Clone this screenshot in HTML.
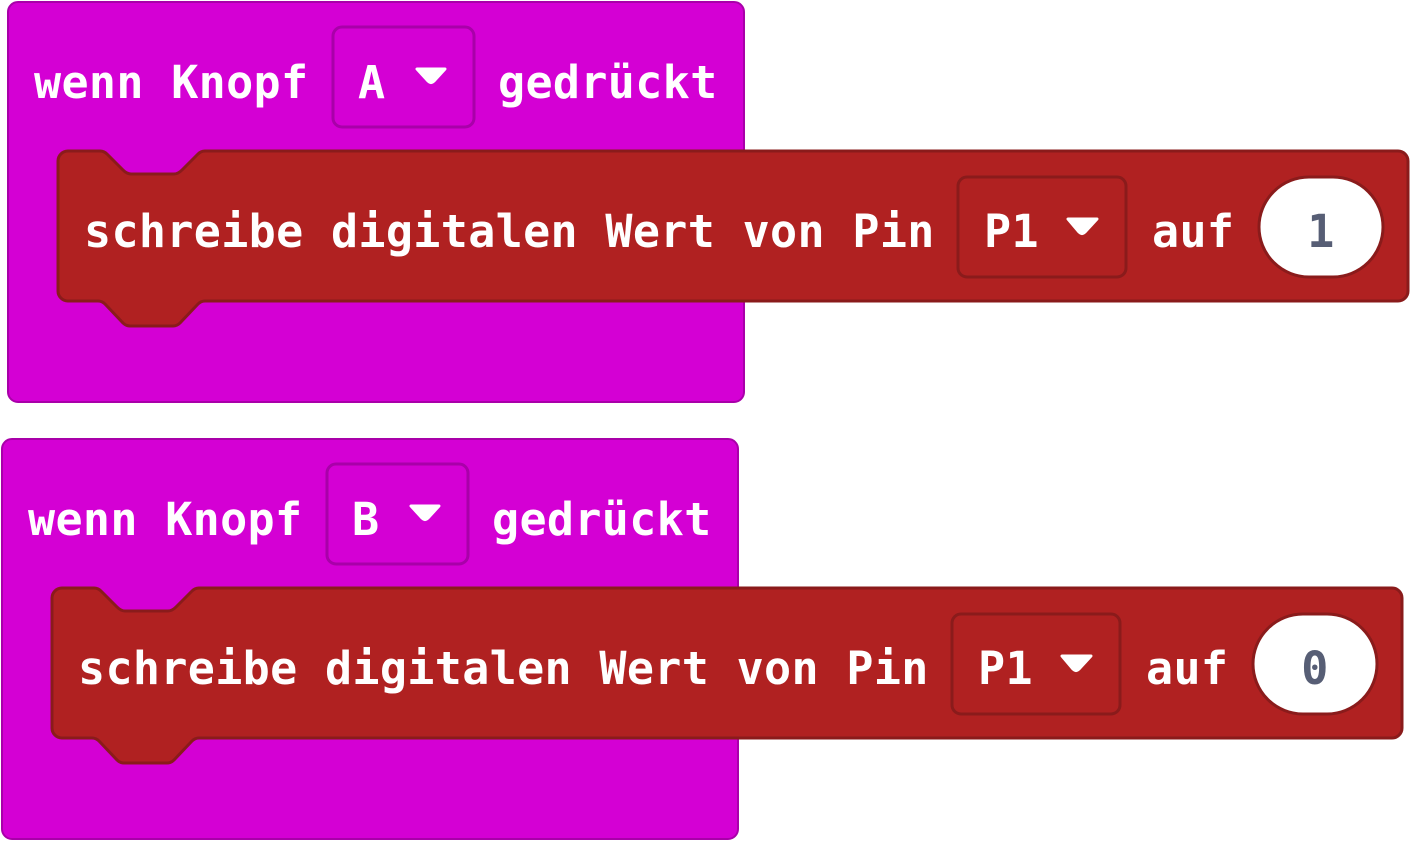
<!DOCTYPE html>
<html><head><style>
html,body{margin:0;padding:0;background:#fff;width:1410px;height:841px;overflow:hidden}
text{font-family:"DejaVu Sans Mono","Liberation Mono",monospace;font-weight:bold;font-size:45px;letter-spacing:0.35px;fill:#fff}
</style></head><body>
<svg width="1410" height="841" viewBox="0 0 1410 841" xmlns="http://www.w3.org/2000/svg">
<defs>
<g id="blk">
<rect x="8" y="2" width="736" height="400" rx="10" fill="#d400d4" stroke="#a900a9" stroke-width="2"/>
<path d="M68,151 H100 Q104,151 107,154 l16,16 Q127,174 131,174 H174 Q178,174 182,170 l16,-16 Q201,151 205,151 H1398 a10,10 0 0 1 10,10 V291 a10,10 0 0 1 -10,10 H205 Q201,301 198,304 l-18,19 Q177,326 173,326 H130 Q126,326 123,323 l-18,-19 Q102,301 98,301 H68 a10,10 0 0 1 -10,-10 V161 a10,10 0 0 1 10,-10 Z" fill="#b02121" stroke="#8a1b1b" stroke-width="3" stroke-linejoin="round"/>
<rect x="333" y="27" width="141" height="100" rx="9" fill="#d400d4" stroke="#a900a9" stroke-width="3"/>
<text x="34" y="98">wenn Knopf</text>
<text x="498" y="98">gedrückt</text>
<text x="84" y="247">schreibe digitalen Wert von Pin</text>
<rect x="958" y="177" width="168" height="100" rx="9" fill="#b02121" stroke="#8a1b1b" stroke-width="3"/>
<text x="984" y="247">P1</text>
<path d="M1068,219 H1097 L1085,232 Q1082,235 1079,232 Z" fill="#fff" stroke="#fff" stroke-width="3" stroke-linejoin="round"/>
<text x="1152" y="247">auf</text>
<rect x="1259" y="177" width="124" height="100" rx="50" fill="#fff" stroke="#8a1b1b" stroke-width="3"/>
</g>
</defs>
<use href="#blk"/>
<text x="358" y="98">A</text>
<path d="M417,69 H445 L434,81 Q431,84 428,81 Z" fill="#fff" stroke="#fff" stroke-width="3" stroke-linejoin="round"/>
<text x="1321" y="247" text-anchor="middle" style="fill:#575e75">1</text>
<g transform="translate(-6,437)">
<use href="#blk"/>
<text x="358" y="98">B</text>
<path d="M417,69 H445 L434,81 Q431,84 428,81 Z" fill="#fff" stroke="#fff" stroke-width="3" stroke-linejoin="round"/>
<text x="1321" y="247" text-anchor="middle" style="fill:#575e75">0</text>
</g>
</svg>
</body></html>
